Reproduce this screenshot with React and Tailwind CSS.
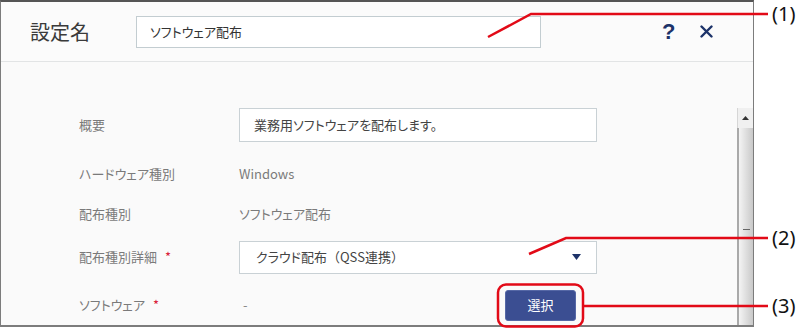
import React from 'react';

const jp = "font-['Noto_Sans_CJK_JP','Noto_Sans',sans-serif] [font-feature-settings:'palt']";

const rows = [
    { label: '概要', type: 'input', value: '業務用ソフトウェアを配布します。', cls: 'h-[34px]' },
    { label: 'ハードウェア種別', type: 'text', value: 'Windows', cls: 'mt-[22px] h-[20px]' },
    { label: '配布種別', type: 'text', value: 'ソフトウェア配布', cls: 'mt-[20px] h-[20px]' },
    { label: '配布種別詳細', required: true, type: 'select', value: 'クラウド配布（QSS連携）', cls: 'mt-[17px] h-[32px]' },
    { label: 'ソフトウェア', required: true, type: 'pick', value: '-', cls: 'mt-[17px] h-[30px]' }
];

const Field = ({ row }) => {
    if (row.type === 'input') {
        return (
            <div className="w-[358px] h-[34px] border border-[#c9d1d5] bg-white flex items-center pl-[14px] text-[13px] text-[#444]">
                {row.value}
            </div>
        );
    }
    if (row.type === 'select') {
        return (
            <div className="w-[358px] h-[33px] border border-[#c9d1d5] bg-white flex items-center justify-between pl-[16px] pr-[15px] text-[13px] text-[#444]">
                <span>
                    クラウド配布<span className="[font-feature-settings:normal]">（</span>QSS連携<span className="[font-feature-settings:normal]">）</span>
                </span>
                <svg width="9" height="6" viewBox="0 0 9 6">
                    <path d="M0 0 L9 0 L4.5 6 Z" fill="#1d3369" />
                </svg>
            </div>
        );
    }
    if (row.type === 'pick') {
        return (
            <div className="w-[337px] flex items-center justify-between text-[13px] text-[#888]">
                <span className="pl-[4px]">{row.value}</span>
                <button className="w-[71px] h-[31px] rounded-[3px] bg-[#3b4e92] border border-[#5668a6] text-white text-[13px]">
                    選択
                </button>
            </div>
        );
    }
    return <span className="text-[13px] text-[#7a7a7a]">{row.value}</span>;
};

const App = () => {
    return (
        <div className={`relative w-[806px] h-[333px] bg-white overflow-hidden ${jp}`}>
            <div className="w-[754px] h-[327px] border border-[#7c7c7c] border-t-2 border-t-[#555] border-b-2 flex flex-col bg-[#fafafa]">
                {/* header */}
                <div className="h-[60px] flex items-center pl-[29px] border-b border-[#e2e4e5] bg-[#fbfbfb]">
                    <span className="w-[106px] text-[20px] text-[#3a3a3a]">設定名</span>
                    <div className="w-[405px] h-[32px] border border-[#c3cdd1] bg-white flex items-center pl-[13px] text-[13px] text-[#333]">
                        ソフトウェア配布
                    </div>
                    <span className="ml-[121px] text-[22px] font-bold text-[#1d3369] font-['Liberation_Sans',sans-serif]">?</span>
                    <svg className="ml-[25px]" width="13" height="13" viewBox="0 0 13 13">
                        <path d="M1.5 1.5 L11.5 11.5 M11.5 1.5 L1.5 11.5" stroke="#1d3369" strokeWidth="2.4" strokeLinecap="round" />
                    </svg>
                </div>

                {/* body */}
                <div className="flex-1 flex">
                    <div className="flex-1 flex flex-col pl-[78px] pt-[46px]">
                        {rows.map((row) => (
                            <div key={row.label} className={`flex items-center ${row.cls}`}>
                                <div className="w-[160px] text-[13px] text-[#7a7a7a]">
                                    {row.label}
                                    {row.required && <span className="ml-[8px] text-[#d9213a]">*</span>}
                                </div>
                                <Field row={row} />
                            </div>
                        ))}
                    </div>
                    {/* scrollbar */}
                    <div className="w-[16px] mt-[46px] flex flex-col">
                        <div className="h-[20px] bg-[#f0f0f0] border-l border-[#d6d6d6] flex items-center justify-center">
                            <svg width="7" height="4" viewBox="0 0 7 4">
                                <path d="M0 4 L3.5 0 L7 4 Z" fill="#333" />
                            </svg>
                        </div>
                        <div className="flex-1 border-l-2 border-[#a9a9a9] bg-gradient-to-r from-[#f4f4f4] to-[#c9c9c9] flex flex-col items-center pt-[101px]">
                            <div className="w-[7px] h-[1px] bg-[#666]" />
                        </div>
                    </div>
                </div>
            </div>

            {/* annotations */}
            <svg className="absolute left-0 top-0" width="806" height="333" viewBox="0 0 806 333">
                <polyline points="488,37 531,14 768,14" fill="none" stroke="#e20a17" strokeWidth="2.5" />
                <polyline points="529,254 566,238 768,238" fill="none" stroke="#e20a17" strokeWidth="2.5" />
                <rect x="498" y="284.5" width="85" height="42" rx="8" fill="none" stroke="#e20a17" strokeWidth="2.5" />
                <line x1="583" y1="306" x2="768" y2="306" stroke="#e20a17" strokeWidth="2.5" />
            </svg>
            <span className="absolute left-[772px] top-[0px] text-[20px] leading-[28px] text-[#111] font-['Noto_Sans',sans-serif]">(1)</span>
            <span className="absolute left-[772px] top-[224px] text-[20px] leading-[28px] text-[#111] font-['Noto_Sans',sans-serif]">(2)</span>
            <span className="absolute left-[772px] top-[292px] text-[20px] leading-[28px] text-[#111] font-['Noto_Sans',sans-serif]">(3)</span>
        </div>
    );
};

export default App;
